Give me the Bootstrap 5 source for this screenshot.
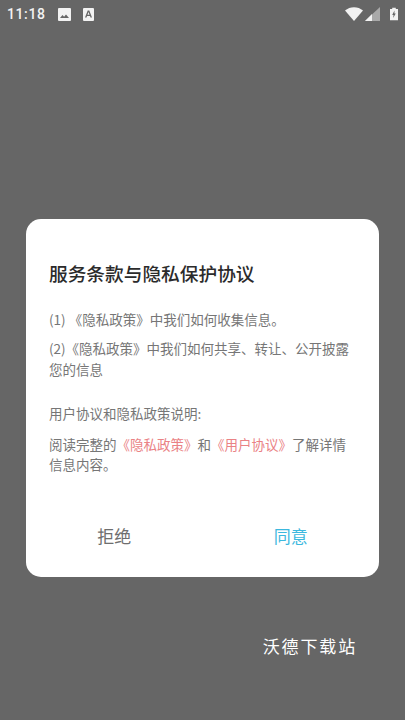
<!DOCTYPE html>
<html lang="zh">
<head>
<meta charset="utf-8">
<title>服务条款与隐私保护协议</title>
<link href="https://cdn.jsdelivr.net/npm/bootstrap@5.3.0/dist/css/bootstrap.min.css" rel="stylesheet">
<style>
html,body{height:100%;margin:0}
body{background:#666;font-family:"Noto Sans CJK SC","Roboto",sans-serif;overflow:hidden}
.screen{width:405px;height:720px}
.statusrow{height:28px;padding:0 7px;color:#f2f2f2}
.clocktxt{font-family:Roboto,sans-serif;font-size:14px;font-weight:500;letter-spacing:.6px;width:51px}
.ic-a{margin-left:12px}
.ic-sig{margin-left:2px}
.ic-bat{margin-left:10px;margin-right:0}
.dlg{width:353px;height:358px;margin:191px 0 0 26px;border-radius:15px;background:#fff}
.dlgcopy{padding:0 23px}
.dlgtitle{font-size:18.7px;line-height:24px;font-weight:500;color:#2b2b2b;margin:42px 0 0;white-space:nowrap}
.dlgtext{font-size:13.5px;line-height:20.5px;color:#767676;margin:0}
.gap-a{margin-top:24px}
.gap-b{margin-top:8.5px}
.gap-c{margin-top:24px}
.gap-d{margin-top:10px}
.redlink{color:#ea8285}
.btnzone{font-size:17px;line-height:24px;margin-top:49.5px}
.btnzone div{width:50%;text-align:center}
.refuse{color:#6e6e6e}
.agree{color:#3cb8de}
.stamp{color:#fff;font-size:17px;letter-spacing:1.85px;line-height:24px;margin:57px 48px 0 0;text-align:right}
</style>
</head>
<body>
<div class="screen">
  <div class="statusrow d-flex align-items-center">
    <span class="clocktxt">11:18</span>
    <svg width="13" height="13" viewBox="0 0 13 13"><path fill="#f2f2f2" d="M1 0h11a1 1 0 0 1 1 1v11a1 1 0 0 1-1 1H1a1 1 0 0 1-1-1V1a1 1 0 0 1 1-1z"/><path fill="#666" d="M2 10l2.5-3 1.600 1.800L8 6.500l3 3.500z"/></svg>
    <svg width="11" height="13" viewBox="0 0 11 13" class="ic-a"><path fill="#f2f2f2" d="M1 0h9a1 1 0 0 1 1 1v11a1 1 0 0 1-1 1H1a1 1 0 0 1-1-1V1a1 1 0 0 1 1-1z"/><path fill="#666" d="M4.700 2.500h1.600L9 9.500H7.500L7 8H4L3.500 9.500H2zM4.500 6.800h2L5.500 4z"/></svg>
    <span class="ms-auto d-flex align-items-center">
      <svg width="18" height="14" viewBox="0 0 18 14"><path fill="#f2f2f2" d="M0 3.500C5-1 13-1 18 3.500L9 14z"/></svg>
      <svg width="15" height="14" viewBox="0 0 15 14" class="ic-sig"><path fill="#a9a9a9" d="M15 0v14H0z"/><path fill="#f2f2f2" d="M7 7v7H0z"/></svg>
      <svg width="8" height="14" viewBox="0 0 9 14" class="ic-bat"><path fill="#f2f2f2" fill-rule="evenodd" d="M2.500 0h4v1.500H9V14H0V1.500h2.500zM5 3L2.500 8H4l-.5 3.500L6.500 6.500H5z"/></svg>
    </span>
  </div>
  <div class="dlg d-flex flex-column">
    <div class="dlgcopy">
      <h1 class="dlgtitle">服务条款与隐私保护协议</h1>
      <p class="dlgtext gap-a">(1) 《隐私政策》中我们如何收集信息。</p>
      <p class="dlgtext gap-b">(2)《隐私政策》中我们如何共享、转让、公开披露您的信息</p>
      <p class="dlgtext gap-c">用户协议和隐私政策说明:</p>
      <p class="dlgtext gap-d">阅读完整的<span class="redlink">《隐私政策》</span>和<span class="redlink">《用户协议》</span>了解详情信息内容。</p>
    </div>
    <div class="btnzone d-flex">
      <div class="refuse">拒绝</div>
      <div class="agree">同意</div>
    </div>
  </div>
  <div class="stamp">沃德下载站</div>
</div>
</body>
</html>
